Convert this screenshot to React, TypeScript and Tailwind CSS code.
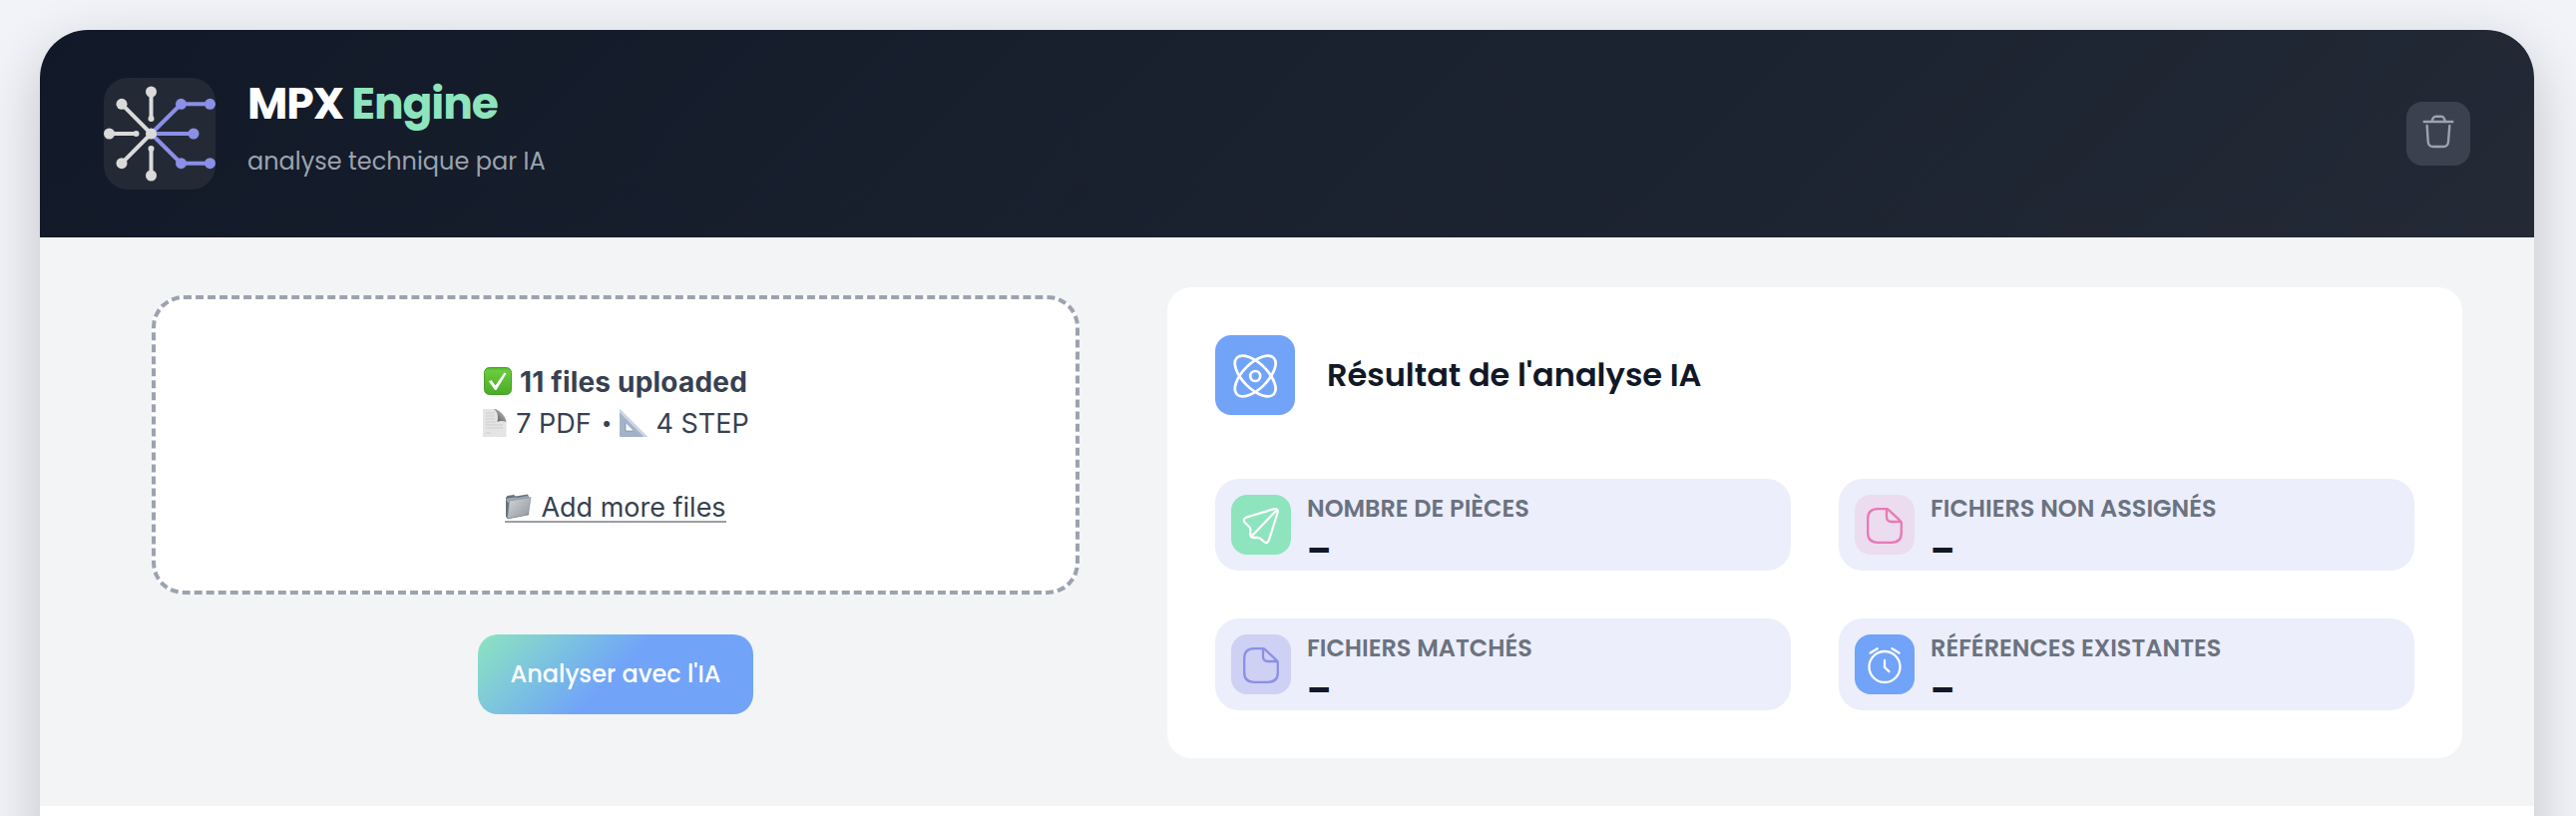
import type { ReactNode } from "react";

const Poppins = "font-['Poppins','Inter',sans-serif]";

function Logo() {
  return (
    <svg viewBox="0 0 112 112" className="size-28">
      <g stroke="#8b8fe6" strokeWidth="4" fill="none">
        <path d="M47.5 56 77.5 26.300H106.500M47.500 56H90M47.500 56 77.500 85.700H106.500" />
      </g>
      <g fill="#8b8fe6">
        <circle cx="77.500" cy="26.300" r="5.500" />
        <circle cx="106.500" cy="26.300" r="5.500" />
        <circle cx="90" cy="56" r="5.500" />
        <circle cx="77.500" cy="85.700" r="5.500" />
        <circle cx="106.500" cy="85.700" r="5.500" />
      </g>
      <path d="M47.500 14V41M47.500 98V71M5.500 56H32.500M18 26.300 47.500 56 18 85.700" stroke="#dadada" strokeWidth="4" fill="none" />
      <g fill="#dadada">
        <circle cx="47.500" cy="14" r="5.500" />
        <circle cx="47.500" cy="98" r="5.500" />
        <circle cx="5.500" cy="56" r="5.500" />
        <circle cx="18" cy="26.300" r="5.500" />
        <circle cx="18" cy="85.700" r="5.500" />
        <circle cx="47.500" cy="56" r="5.500" />
        <circle cx="47.500" cy="41" r="3" />
        <circle cx="47.500" cy="71" r="3" />
        <circle cx="32.500" cy="56" r="3" />
      </g>
    </svg>
  );
}

function TrashIcon() {
  return (
    <svg viewBox="0 0 64 64" className="size-16" fill="none" stroke="#9ca3af" strokeWidth="2.400" strokeLinecap="round" strokeLinejoin="round">
      <path d="M17.700 20H46.300M25.500 19.500 26.700 16.500Q27.500 14.700 29.500 14.700H35Q37 14.700 37.700 16.500L39 19.500M20.700 24 21.700 40Q22.200 45 27 45H37Q41.500 45 42 40L43.300 24" />
    </svg>
  );
}

function AtomIcon() {
  return (
    <svg viewBox="0 0 80 80" className="size-20" fill="none" stroke="#fff" strokeWidth="2.700">
      <ellipse cx="40.200" cy="41" rx="12.500" ry="26" transform="rotate(45 40.200 41)" />
      <ellipse cx="40.200" cy="41" rx="12.500" ry="26" transform="rotate(-45 40.200 41)" />
      <circle cx="40.200" cy="41" r="5" />
    </svg>
  );
}

function PlaneIcon() {
  return (
    <svg viewBox="0 0 60 60" className="size-15" fill="none" stroke="#fff" strokeWidth="2.300" strokeLinecap="round" strokeLinejoin="round">
      <path d="M43 14.200 15.500 22.500Q11.500 24.500 13.500 27.500L18.500 32.500Q19.500 33.500 19.300 35.500V39.500Q19.500 43 23 43H26.500Q28.500 43 30 44.500L33.500 47.500Q36 49 37.700 46L46.700 17.500Q47.200 13.500 43 14.200ZM45.500 15.500 20.500 41.500" />
    </svg>
  );
}

function FileIcon({ color }: { color: string }) {
  return (
    <svg viewBox="0 0 60 60" className="size-15" fill="none" stroke={color} strokeWidth="2.300" strokeLinecap="round" strokeLinejoin="round">
      <path d="M32 14.200H23Q13.200 14.200 13.200 24V38Q13.200 47.800 23 47.800H37Q46.800 47.800 46.800 38V29Q46.800 26.800 45 25.300L34 15.200Q33 14.200 32 14.200V22Q32 27 37 27H46.500" />
    </svg>
  );
}

function AlarmIcon() {
  return (
    <svg viewBox="0 0 60 60" className="size-15" fill="none" stroke="#fff" strokeWidth="2.300" strokeLinecap="round" strokeLinejoin="round">
      <circle cx="30" cy="32.500" r="15.500" />
      <path d="M30 26V33L34.500 37.200M15.700 18.600 22.700 14.300M44.500 18.600 37.500 14.300" />
    </svg>
  );
}

function CheckEmoji() {
  return (
    <svg viewBox="0 0 28 28" className="size-7 shrink-0">
      <defs>
        <linearGradient id="check" x1="0" y1="0" x2="0" y2="1">
          <stop offset="0" stopColor="#4fb52b" />
          <stop offset=".12" stopColor="#6acb3f" />
          <stop offset="1" stopColor="#4aab27" />
        </linearGradient>
      </defs>
      <rect x=".5" y=".5" width="27" height="27" rx="5" fill="url(#check)" stroke="#4a9d2d" />
      <path d="M5 14.500 7.500 13 11.500 18.500 20.500 5.500 22.500 6.500 12.500 23H11Z" fill="#fff" />
    </svg>
  );
}

function PageEmoji() {
  return (
    <svg viewBox="0 0 28 28" className="size-7 shrink-0">
      <defs>
        <linearGradient id="curl" x1="0" y1="1" x2="1" y2="0">
          <stop offset="0" stopColor="#4b4b4b" />
          <stop offset=".6" stopColor="#9b9b9b" />
          <stop offset="1" stopColor="#ededed" />
        </linearGradient>
      </defs>
      <path d="M0 0H13L23.500 12V28H0Z" fill="#e4e4e4" />
      <path d="M3 4H12M3 7H12M3 10H12M3 13H13M3 16H20M3 19H20M3 24H8" stroke="#cdcdcd" />
      <path d="M11 0C16 0 23 7 23.500 13C20 11.500 17 11.500 14.500 13C15.500 8 15 3 11 0Z" fill="url(#curl)" />
    </svg>
  );
}

function RulerEmoji() {
  return (
    <svg viewBox="0 0 28 28" className="size-7 shrink-0">
      <path fillRule="evenodd" d="M0 0 28 28H0ZM6 14V22H14Z" fill="#a3b2c8" />
      <path d="M0 0 28 28H24.500L0 3.500Z" fill="#cbd7e7" />
      <path d="M6 14V22H14" stroke="#7f90aa" strokeWidth=".8" fill="none" />
    </svg>
  );
}

function FolderEmoji() {
  return (
    <svg viewBox="0 0 28 28" className="size-7 shrink-0">
      <defs>
        <linearGradient id="folder" x1="0" y1="0" x2="1" y2="1">
          <stop offset="0" stopColor="#d3d6d9" />
          <stop offset="1" stopColor="#90959b" />
        </linearGradient>
      </defs>
      <path d="M1 5 2.500 3 9 2 11 3.500 23 1.500 24 4V22L3 26 1 24Z" fill="#65717c" />
      <path d="M1 6 10 4.500 12 5 23.500 3V6L3 10Z" fill="#9daab5" />
      <path d="M4.500 8 26 4.500 23.500 22 2.500 26Z" fill="url(#folder)" stroke="#7c858d" strokeWidth=".6" />
    </svg>
  );
}

function Stat({ icon, tile, label }: { icon: ReactNode; tile: string; label: string }) {
  return (
    <div className="flex h-23 gap-4 rounded-3xl bg-[#eceefb] p-4">
      <div className={`size-15 shrink-0 rounded-2xl ${tile}`}>{icon}</div>
      <div className={`${Poppins} flex flex-col`}>
        <span className="h-7 whitespace-nowrap text-[24px] leading-7 font-semibold text-[#6b7280]">{label}</span>
        <span className="mt-2 h-10 text-[35px] leading-10 font-bold text-[#111827]">–</span>
      </div>
    </div>
  );
}

export default function App() {
  return (
    <main className="h-[818px] overflow-hidden bg-[#f1f3f9] pt-[30px] pr-[42px] pl-10">
      <div className="flex h-[1200px] flex-col overflow-hidden rounded-[48px] bg-white shadow-[0_20px_60px_rgba(0,0,0,0.2)]">
        <header className="flex h-52 shrink-0 items-center justify-between bg-linear-135 from-[#111827] to-[#232a36] px-16">
          <div className="flex items-center gap-8">
            <div className="size-28 overflow-hidden rounded-3xl bg-[#232a36]">
              <Logo />
            </div>
            <div className={`${Poppins} h-28`}>
              <h1 className="h-[60px] text-[44px] leading-[52px] font-bold tracking-tight whitespace-nowrap text-white">
                MPX <span className="text-[#8de4bd]">Engine</span>
              </h1>
              <p className="text-[24px] leading-[48px] whitespace-nowrap text-[#9ca3af]">analyse technique par IA</p>
            </div>
          </div>
          <button className="size-16 rounded-2xl bg-[#3c4150]">
            <TrashIcon />
          </button>
        </header>

        <section className="flex h-[570px] shrink-0 items-start bg-[#f2f4f6] pt-[50px] pr-[72px] pl-28">
          <div className="flex w-[930px] flex-col items-center pt-2">
            <div className="flex h-[300px] w-full flex-col items-center rounded-[32px] border-4 border-dashed border-[#9ca3af] bg-white pt-[61px] font-['Inter',sans-serif] text-[27px] leading-[42px] whitespace-nowrap text-[#374151]">
              <p className="flex items-center gap-2 text-[28px] font-bold tracking-[0.2px]"><CheckEmoji /><span className="pt-0.5 leading-10">11 files uploaded</span></p>
              <p className="flex items-center pl-px">
                <PageEmoji />
                <span className="ml-[5px] pt-0.5 leading-10">7 PDF</span>
                <span className="mr-2 ml-2.5 pt-0.5 text-[19px] leading-10">•</span>
                <RulerEmoji />
                <span className="ml-2 pt-0.5 leading-10">4 STEP</span>
              </p>
              <div className="mt-[42px] flex h-[42px] items-center">
                <a className="flex h-[31px] items-center gap-2 border-b-2 border-[#9b9ea5] pt-0.5"><FolderEmoji /><span className="pt-0.5">Add more files</span></a>
              </div>
            </div>
            <button className={`${Poppins} mt-10 h-20 w-[276px] rounded-[20px] bg-linear-135 from-[#8de4bd] to-[#71a3f8] to-50% text-[24px] font-medium whitespace-nowrap text-white`}>
              Analyser avec l'IA
            </button>
          </div>

          <div className="ml-22 h-[472px] w-[1298px] rounded-3xl bg-white p-12">
            <div className="flex items-center gap-8">
              <div className="size-20 rounded-2xl bg-[#71a3f8]"><AtomIcon /></div>
              <h2 className={`${Poppins} text-[32px] font-semibold whitespace-nowrap text-[#111827]`}>Résultat de l'analyse IA</h2>
            </div>
            <div className="mt-16 grid grid-cols-2 gap-12">
              <Stat icon={<PlaneIcon />} tile="bg-[#8de4bd]" label="NOMBRE DE PIÈCES" />
              <Stat icon={<FileIcon color="#e879b5" />} tile="bg-[#ecdcef]" label="FICHIERS NON ASSIGNÉS" />
              <Stat icon={<FileIcon color="#8b8fe6" />} tile="bg-[#ced0f4]" label="FICHIERS MATCHÉS" />
              <Stat icon={<AlarmIcon />} tile="bg-[#71a3f8]" label="RÉFÉRENCES EXISTANTES" />
            </div>
          </div>
        </section>
      </div>
    </main>
  );
}
